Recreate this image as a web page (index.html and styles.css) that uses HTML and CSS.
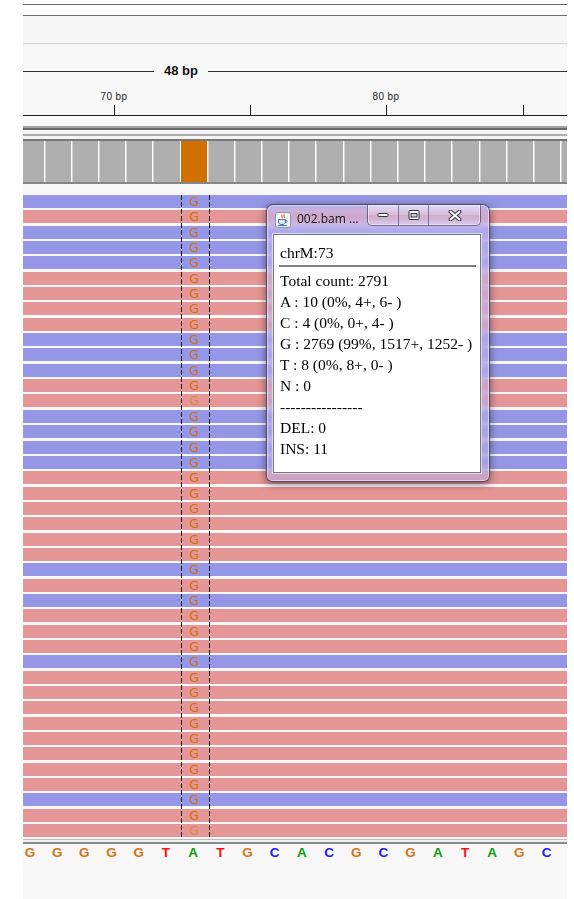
FILE: index.html
```html
<!DOCTYPE html>
<html lang="en">
<head>
<meta charset="utf-8">
<title>chrM alignment view</title>
<link rel="stylesheet" href="styles.css">
</head>
<body>
<div class="view">
  <div class="header-strip"></div>
  <div class="name-band"></div>

  <div class="ruler">
    <div class="span-line">
      <span class="seg seg-left"></span>
      <span class="span-label">48 bp</span>
      <span class="seg seg-right"></span>
    </div>
    <div class="tick-labels">
      <span class="tick-label" style="left:91px">70 bp</span>
      <span class="tick-label" style="left:363px">80 bp</span>
    </div>
    <div class="ticks">
      <span class="tick" style="left:91px"></span>
      <span class="tick" style="left:227px"></span>
      <span class="tick" style="left:363px"></span>
      <span class="tick" style="left:500px"></span>
    </div>
  </div>

  <div class="track-divider"></div>
  <div class="coverage">
    <span></span><span></span><span></span><span></span><span></span><span></span>
    <span class="hit"></span>
    <span></span><span></span><span></span><span></span><span></span><span></span><span></span>
    <span></span><span></span><span></span><span></span><span></span><span></span><span></span>
  </div>

  <div class="reads">
    <div class="read f"><span class="g">G</span></div>
    <div class="read r"><span class="g">G</span></div>
    <div class="read f"><span class="g">G</span></div>
    <div class="read f"><span class="g">G</span></div>
    <div class="read f"><span class="g">G</span></div>
    <div class="read r"><span class="g">G</span></div>
    <div class="read r"><span class="g">G</span></div>
    <div class="read r"><span class="g">G</span></div>
    <div class="read r"><span class="g">G</span></div>
    <div class="read f"><span class="g">G</span></div>
    <div class="read f"><span class="g">G</span></div>
    <div class="read f"><span class="g">G</span></div>
    <div class="read r"><span class="g">G</span></div>
    <div class="read r"><span class="g low">G</span></div>
    <div class="read f"><span class="g">G</span></div>
    <div class="read f"><span class="g">G</span></div>
    <div class="read f"><span class="g">G</span></div>
    <div class="read f"><span class="g">G</span></div>
    <div class="read r"><span class="g">G</span></div>
    <div class="read r"><span class="g">G</span></div>
    <div class="read r"><span class="g">G</span></div>
    <div class="read r"><span class="g">G</span></div>
    <div class="read r"><span class="g">G</span></div>
    <div class="read r"><span class="g">G</span></div>
    <div class="read f"><span class="g">G</span></div>
    <div class="read r"><span class="g">G</span></div>
    <div class="read f"><span class="g">G</span></div>
    <div class="read r"><span class="g">G</span></div>
    <div class="read r"><span class="g">G</span></div>
    <div class="read r"><span class="g">G</span></div>
    <div class="read f"><span class="g">G</span></div>
    <div class="read r"><span class="g">G</span></div>
    <div class="read r"><span class="g">G</span></div>
    <div class="read r"><span class="g">G</span></div>
    <div class="read r"><span class="g">G</span></div>
    <div class="read r"><span class="g">G</span></div>
    <div class="read r"><span class="g">G</span></div>
    <div class="read r"><span class="g">G</span></div>
    <div class="read r"><span class="g">G</span></div>
    <div class="read f"><span class="g">G</span></div>
    <div class="read r"><span class="g">G</span></div>
    <div class="read r"><span class="g low">G</span></div>
  </div>

  <div class="seq-divider"></div>
  <div class="sequence">
    <span class="nt-g">G</span><span class="nt-g">G</span><span class="nt-g">G</span><span class="nt-g">G</span><span class="nt-g">G</span>
    <span class="nt-t">T</span><span class="nt-a">A</span><span class="nt-t">T</span><span class="nt-g">G</span><span class="nt-c">C</span>
    <span class="nt-a">A</span><span class="nt-c">C</span><span class="nt-g">G</span><span class="nt-c">C</span><span class="nt-g">G</span>
    <span class="nt-a">A</span><span class="nt-t">T</span><span class="nt-a">A</span><span class="nt-g">G</span><span class="nt-c">C</span>
  </div>
</div>

<div class="popup">
  <div class="title">
    <svg class="app-icon" width="16" height="16" viewBox="0 0 16 16">
      <rect x="0.5" y="0.5" width="15" height="15" rx="2.5" fill="#f2f4f8" stroke="#8e97aa"/>
      <path d="M7.2 2.6c-1.6 1.2 1.1 2.1-0.3 3.6M9.3 2.2c-1.4 1.3 1.2 2.3-0.2 3.8" fill="none" stroke="#e36c0a" stroke-width="1.1"/>
      <path d="M3.4 7.6h7v2.4c0 1.6-1.5 2.6-3.5 2.6s-3.5-1-3.5-2.6z" fill="#dfe8f4" stroke="#4c6ea3" stroke-width="1"/>
      <path d="M10.4 8.3h0.9c1.1 0 1.1 1.9 0 1.9h-1.1" fill="none" stroke="#4c6ea3" stroke-width="1"/>
      <path d="M2.8 13.6h9.4" stroke="#4c6ea3" stroke-width="1"/>
    </svg>
    <span class="title-text">002.bam ...</span>
    <div class="caption-buttons">
      <span class="cap cap-min">
        <svg width="12" height="6" viewBox="0 0 12 6"><rect x="1" y="1.5" width="10" height="3" rx="1" fill="#fff" stroke="#33334a"/></svg>
      </span>
      <span class="cap cap-max">
        <svg width="12" height="10" viewBox="0 0 12 10"><rect x="1" y="0.5" width="10" height="9" rx="1" fill="#fff" stroke="#33334a"/><rect x="3" y="3.5" width="6" height="3.5" fill="#c9cbe0" stroke="#33334a"/></svg>
      </span>
      <span class="cap cap-close">
        <svg width="14" height="11" viewBox="0 0 14 11"><path d="M2.5 1.5l9 8M11.5 1.5l-9 8" stroke="#33334a" stroke-width="4" stroke-linecap="round"/><path d="M2.5 1.5l9 8M11.5 1.5l-9 8" stroke="#fff" stroke-width="2" stroke-linecap="round"/></svg>
      </span>
    </div>
  </div>
  <div class="client">
    <div class="line">chrM:73</div>
    <div class="sep"></div>
    <div class="line">Total count: 2791</div>
    <div class="line">A : 10 (0%, 4+, 6- )</div>
    <div class="line">C : 4 (0%, 0+, 4- )</div>
    <div class="line">G : 2769 (99%, 1517+, 1252- )</div>
    <div class="line">T : 8 (0%, 8+, 0- )</div>
    <div class="line">N : 0</div>
    <div class="line">----------------</div>
    <div class="line">DEL: 0</div>
    <div class="line">INS: 11</div>
  </div>
</div>
</body>
</html>
```

FILE: styles.css
```css
html, body {
  margin: 0;
  padding: 0;
}

body {
  width: 574px;
  height: 899px;
  overflow: hidden;
  background: #ffffff;
  font-family: "Liberation Sans", Arial, sans-serif;
  position: relative;
}

/* main genome view panel */
.view {
  margin-left: 23px;
  width: 544px;
  height: 899px;
  overflow: hidden;
  background: #f8f8f8;
  position: relative;
}

.header-strip {
  height: 16px;
  background: linear-gradient(to bottom,
    #ffffff 0 4px, #6d6d6d 4px 5px,
    #ffffff 5px 15px, #6d6d6d 15px 16px);
}

.name-band {
  height: 27px;
  background: #f6f6f6;
  border-bottom: 1px solid #d3d3d3;
}

/* ruler */
.ruler {
  height: 82px;
  box-sizing: border-box;
  padding-top: 20px;
  background: #f8f8f8;
}

.span-line {
  height: 14px;
  display: flex;
  align-items: center;
}

.seg {
  height: 1px;
  background: #333333;
}

.seg-left {
  width: 131px;
}

.seg-right {
  flex: 1;
}

.span-label {
  width: 54px;
  text-align: center;
  font-weight: bold;
  font-size: 13px;
  line-height: 14px;
  color: #111;
}

.tick-labels {
  position: relative;
  margin-top: 13px;
  height: 12px;
}

.tick-label {
  position: absolute;
  top: 0;
  transform: translateX(-50%);
  font-size: 10px;
  line-height: 12px;
  letter-spacing: 0.4px;
  color: #222;
  white-space: nowrap;
}

.ticks {
  position: relative;
  margin-top: 2px;
  height: 10px;
  border-bottom: 1px solid #1e1e1e;
}

.tick {
  position: absolute;
  top: 0;
  width: 1px;
  height: 10px;
  background: #222;
}

/* coverage track */
.track-divider {
  height: 15px;
  background: linear-gradient(to bottom,
    #a2a2a2 0 2px, #6a6a6a 2px 4px,
    #f4f4f4 4px 8px, #acacac 8px 10px,
    #f4f4f4 10px 13px, #777777 13px 15px);
}

.coverage {
  display: flex;
  margin-left: -6.6px;
  height: 41px;
  border-bottom: 2px solid #868686;
  margin-bottom: 11px;
}

.coverage span {
  flex: 0 0 27.2px;
  box-sizing: border-box;
  background: #afafaf;
  border-left: 1px solid #ffffff;
  box-shadow: inset 1px 0 #d4d4d4;
}

.coverage span.hit {
  background: #d17000;
  box-shadow: none;
}

/* alignments */
.reads {
  position: relative;
  display: grid;
  grid-auto-rows: 13px;
  row-gap: 2.35px;
}

.reads::before,
.reads::after {
  content: "";
  position: absolute;
  top: 0;
  bottom: 0;
  width: 1px;
  background: repeating-linear-gradient(to bottom, #151515 0 5px, transparent 5px 7px);
}

.reads::before {
  left: 158px;
}

.reads::after {
  left: 185.5px;
}

.read {
  display: flex;
}

.read.f {
  background: #9597e6;
}

.read.r {
  background: #e59696;
}

.read .g {
  margin-left: 157.6px;
  width: 27px;
  text-align: center;
  font-family: "DejaVu Sans", "Liberation Sans", sans-serif;
  font-size: 12.5px;
  line-height: 14px;
  color: #d2700c;
}

.read .g.low {
  color: #d98a4a;
}

/* reference sequence */
.seq-divider {
  margin-top: 1.65px;
  height: 5px;
  background: linear-gradient(to bottom,
    #bdbdbd 0 1px, #efefef 1px 3px, #8a8a8a 3px 5px);
}

.sequence {
  display: flex;
  margin-left: -6.6px;
  padding-top: 1px;
}

.sequence span {
  flex: 0 0 27.2px;
  text-align: center;
  font-weight: bold;
  font-size: 13.5px;
  line-height: 16px;
}

.nt-g { color: #d2741a; }
.nt-t { color: #ff1010; }
.nt-a { color: #0a9f0a; }
.nt-c { color: #1a1aff; }

/* popup window */
.popup {
  position: absolute;
  left: 266px;
  top: 204px;
  width: 224px;
  height: 278px;
  box-sizing: border-box;
  border: 1px solid rgba(45, 40, 75, 0.75);
  border-radius: 7px 7px 6px 6px;
  background: linear-gradient(to bottom, rgba(190, 180, 240, 0.6), rgba(175, 170, 235, 0.5));
  backdrop-filter: blur(3px);
  box-shadow: 0 2px 8px rgba(0, 0, 0, 0.5), inset 0 0 0 1px rgba(255, 255, 255, 0.5);
  display: flex;
  flex-direction: column;
}

.title {
  position: relative;
  height: 29px;
  flex: none;
  display: flex;
  align-items: center;
  padding-left: 8px;
}

.app-icon {
  flex: none;
}

.title-text {
  margin-left: 6px;
  margin-top: -2px;
  font-family: "Open Sans", "DejaVu Sans", sans-serif;
  font-size: 12px;
  color: #111;
}

.caption-buttons {
  position: absolute;
  top: 0;
  right: 8px;
  height: 20px;
  display: flex;
  border: 1px solid rgba(40, 40, 70, 0.6);
  border-top: none;
  border-radius: 0 0 5px 5px;
  overflow: hidden;
  background: linear-gradient(to bottom,
    rgba(255, 255, 255, 0.5), rgba(255, 255, 255, 0.2) 50%,
    rgba(255, 255, 255, 0.05) 52%, rgba(255, 255, 255, 0.25));
  box-shadow: inset 0 0 0 1px rgba(255, 255, 255, 0.45);
}

.cap {
  display: flex;
  align-items: center;
  justify-content: center;
}

.cap + .cap {
  border-left: 1px solid rgba(40, 40, 70, 0.5);
}

.cap-min { width: 30px; }
.cap-max { width: 29px; }
.cap-close { width: 51px; }

.client {
  flex: 1;
  margin: 0 8px 8px 6px;
  box-sizing: border-box;
  background: #ffffff;
  border: 1px solid #777777;
  box-shadow: 0 0 0 1px rgba(255, 255, 255, 0.55);
  padding: 7.5px 4px 0 6px;
  font-family: "Liberation Serif", "Times New Roman", serif;
  font-size: 15.5px;
  line-height: 20.9px;
  color: #000;
}

.line {
  white-space: nowrap;
}

.sep {
  height: 2px;
  margin: 2px 0 4px -1px;
  background: #808080;
}
```
